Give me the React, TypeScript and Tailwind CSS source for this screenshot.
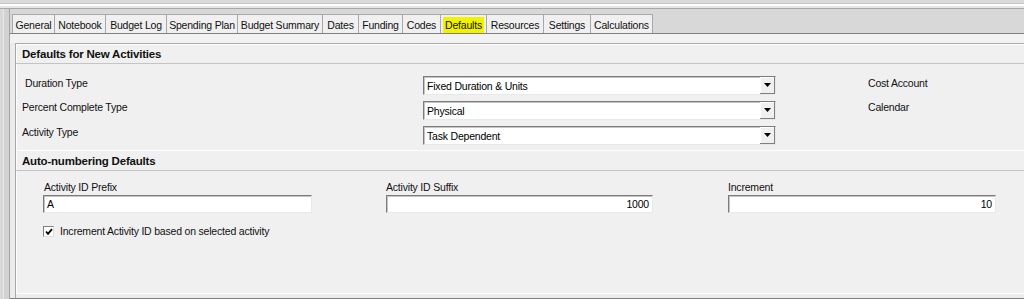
import React from "react";

const tabs = [
  { label: "General", w: 43 },
  { label: "Notebook", w: 52 },
  { label: "Budget Log", w: 62 },
  { label: "Spending Plan", w: 72 },
  { label: "Budget Summary", w: 86 },
  { label: "Dates", w: 37 },
  { label: "Funding", w: 45 },
  { label: "Codes", w: 39 },
  { label: "Defaults", w: 47, active: true },
  { label: "Resources", w: 58 },
  { label: "Settings", w: 48 },
  { label: "Calculations", w: 63 },
];

function Dropdown({ value }: { value: string }) {
  return (
    <div className="w-[353px] h-[19px] flex bg-white border-t border-l border-[#7c7c7c] border-b border-r border-b-[#e8e8e8] border-r-[#e8e8e8] shadow-[inset_1px_1px_0_#c4c4c4]">
      <div className="flex-1 pl-[3px] pt-px flex items-center leading-none text-black">{value}</div>
      <div className="w-[15px] h-[17px] bg-[#f0f0f0] border-r border-b border-[#808080] shadow-[inset_1px_1px_0_#ffffff] flex items-center justify-center">
        <svg width="7" height="4" viewBox="0 0 7 4">
          <path d="M0 0 H7 L3.5 4 Z" fill="#000" />
        </svg>
      </div>
    </div>
  );
}

function TextField({ value, right, w }: { value: string; right?: boolean; w: number }) {
  return (
    <div
      className={`h-[18px] flex items-center bg-white border-t border-l border-[#7c7c7c] border-b border-r border-b-[#e8e8e8] border-r-[#e8e8e8] shadow-[inset_1px_1px_0_#c4c4c4] leading-none text-black ${right ? "justify-end pr-[3px]" : "pl-[3px]"}`}
      style={{ width: w }}
    >
      {value}
    </div>
  );
}

export default function App() {
  return (
    <div className="w-[1024px] h-[299px] overflow-hidden bg-[#d8d8d8] font-['Liberation_Sans',Arial,sans-serif] text-[10.5px] tracking-[-0.2px] text-[#111]">
      {/* top strips */}
      <div className="h-[4px] bg-[#dadada] border-b border-[#c6c6c6]" />
      <div className="h-[2px] bg-white" />
      <div className="h-[3px] bg-[#e6e6e6] border-b border-[#a8a8a8]" />
      <div className="flex h-[290px]">
        {/* left gutter */}
        <div className="w-[10px] shrink-0 flex">
          <div className="w-[3px] bg-[#d8d8d8]" />
          <div className="w-[1px] bg-[#e8e8e8]" />
          <div className="flex-1 bg-[#d2d2d2] border-r border-[#a4a4a4]" />
        </div>
        <div className="flex-1 flex flex-col">
          {/* tab bar */}
          <div className="h-[25px] shrink-0 bg-[#d8d8d8] border-b border-[#808080] flex items-end pl-[2px]">
            {tabs.map((t) => (
              <div
                key={t.label}
                className="h-[19px] shrink-0 bg-[#f0f0f0] border-t border-l border-r border-[#a8a8a8] -mr-px flex items-center justify-center whitespace-nowrap leading-none pt-[2px]"
                style={{ width: t.w }}
              >
                {t.active ? (
                  <span className="bg-[#f2f200] px-[2px] pt-[3px] pb-[2px]">{t.label}</span>
                ) : (
                  t.label
                )}
              </div>
            ))}
          </div>
          {/* panel */}
          <div className="flex-1 bg-[#ececec] flex flex-col">
            <div className="h-[9px] shrink-0 bg-[#f2f2f2]" />
            <div className="flex-1 flex pl-[5px]">
              <div className="flex-1 bg-[#f0f0f0] border-t border-l border-[#a8a8a8] shadow-[inset_1px_1px_0_#ffffff] flex flex-col">
                {/* header 1 */}
                <div className="h-[20px] shrink-0 border-b border-[#c4c4c4] flex items-center pl-[6px] pt-[2px] text-[11.5px] font-bold leading-none">
                  Defaults for New Activities
                </div>
                {/* rows */}
                <div className="h-[87px] shrink-0 border-b border-white">
                  <div className="flex pt-[11px]">
                    <div className="w-[407px] shrink-0 flex flex-col leading-none -mt-[4px]">
                      <div className="h-[25px] flex items-center pl-[9px]">Duration Type</div>
                      <div className="h-[24px] flex items-center pl-[6px] -mt-[1px]">Percent Complete Type</div>
                      <div className="h-[25px] flex items-center pl-[6px] mt-[1px]">Activity Type</div>
                    </div>
                    <div className="flex flex-col gap-[6px] mt-[1px]">
                      <Dropdown value="Fixed Duration & Units" />
                      <Dropdown value="Physical" />
                      <Dropdown value="Task Dependent" />
                    </div>
                    <div className="flex flex-col pl-[92px] leading-none -mt-[1px]">
                      <div className="h-[19px] flex items-center">Cost Account</div>
                      <div className="h-[24px] flex items-center pt-[5px]">Calendar</div>
                    </div>
                  </div>
                </div>
                {/* header 2 */}
                <div className="h-[20px] shrink-0 border-b border-[#c4c4c4] flex items-center pl-[6px] pt-[3px] text-[11.5px] font-bold leading-none">
                  Auto-numbering Defaults
                </div>
                {/* auto fields */}
                <div className="flex-1 pl-[27px] pt-[9px] border-b border-white">
                  <div className="flex">
                    <div className="w-[343px] shrink-0 flex flex-col">
                      <div className="h-[14px] leading-none flex items-center pl-px">Activity ID Prefix</div>
                      <div className="mt-[1px]">
                        <TextField value="A" w={269} />
                      </div>
                    </div>
                    <div className="w-[342px] shrink-0 flex flex-col">
                      <div className="h-[14px] leading-none flex items-center">Activity ID Suffix</div>
                      <div className="mt-[1px]">
                        <TextField value="1000" right w={267} />
                      </div>
                    </div>
                    <div className="flex flex-col">
                      <div className="h-[14px] leading-none flex items-center">Increment</div>
                      <div className="mt-[1px]">
                        <TextField value="10" right w={268} />
                      </div>
                    </div>
                  </div>
                  <div className="flex items-center mt-[13px] gap-[6px]">
                    <div className="w-[11px] h-[11px] bg-white border-t border-l border-[#808080] border-b border-r border-b-[#e0e0e0] border-r-[#e0e0e0] flex items-center justify-center">
                      <svg width="8" height="8" viewBox="0 0 8 8">
                        <path d="M1 3.5 L3 5.8 L7 1.2" stroke="#000" strokeWidth="1.8" fill="none" />
                      </svg>
                    </div>
                    <span className="leading-none">Increment Activity ID based on selected activity</span>
                  </div>
                </div>
                <div className="h-[4px] shrink-0 bg-[#ececec]" />
              </div>
            </div>
            <div className="h-[1px] shrink-0 bg-[#808080]" />
          </div>
        </div>
      </div>
    </div>
  );
}
